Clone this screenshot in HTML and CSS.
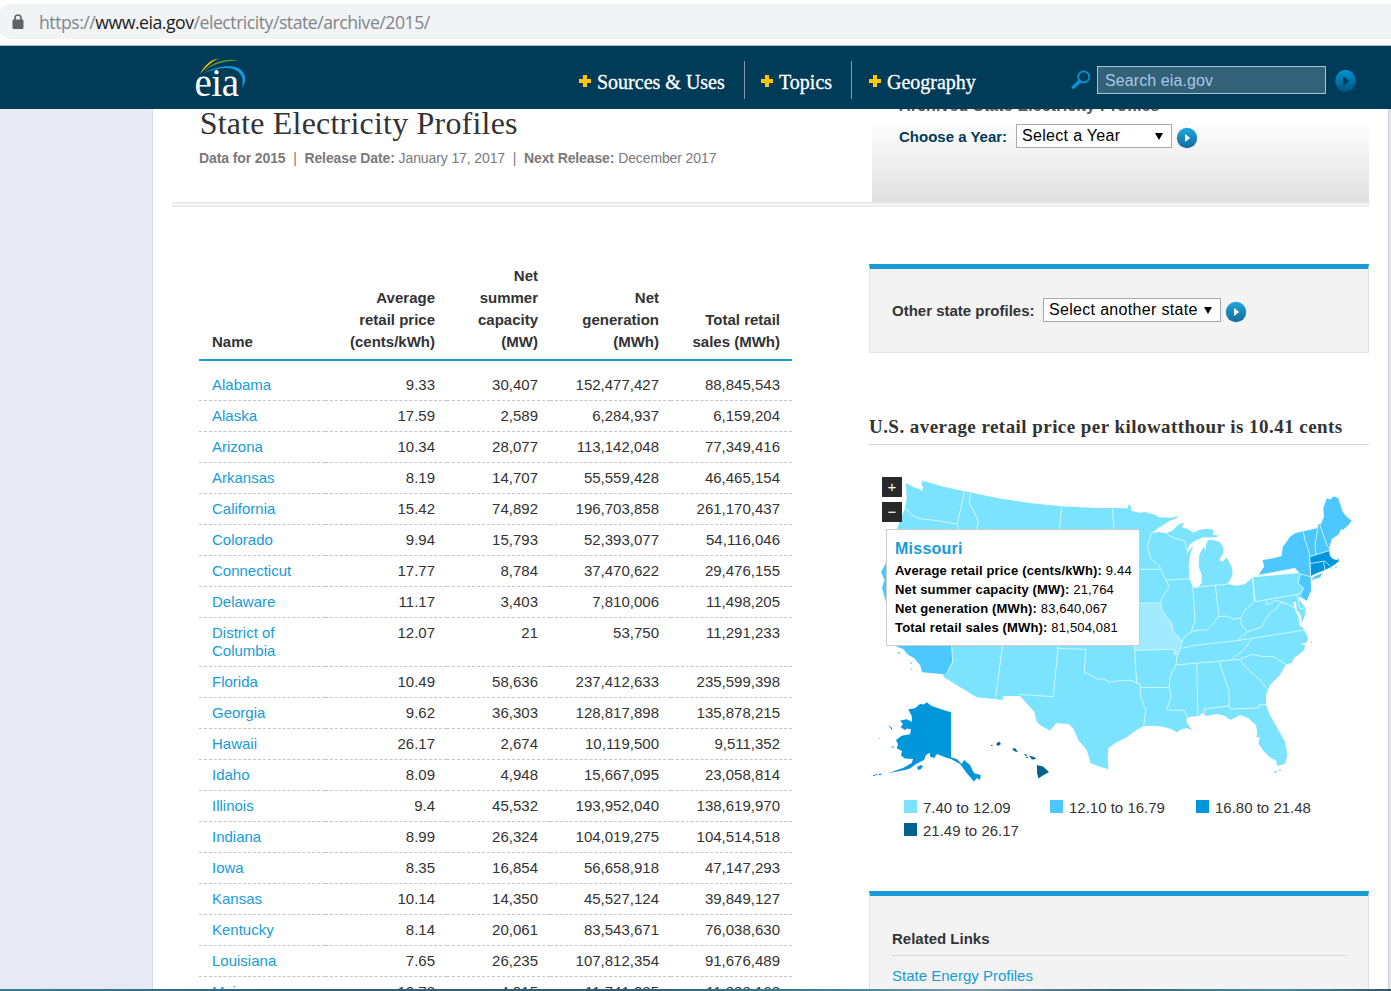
FILE: index.html
```html
<!DOCTYPE html>
<html lang="en">
<head>
<meta charset="utf-8">
<title>State Electricity Profiles</title>
<link rel="stylesheet" href="styles.css">
</head>
<body>
<div class="urlbar"><div class="address">
<svg class="lock" width="12" height="16" viewBox="0 0 12 16"><rect x="0.5" y="5.5" width="11" height="9.5" rx="1.3" fill="#5f6368"/><path d="M3 6V4a3 3 0 0 1 6 0v2" fill="none" stroke="#5f6368" stroke-width="1.6"/></svg>
<span class="url">https://<b>www.eia.gov</b>/electricity/state/archive/2015/</span></div></div>
<header class="top">
<svg class="logo" width="56" height="44" viewBox="192 55 56 44"><path d="M200 74C204 66 211 59 219 58.500C212 61 207 66 200 74Z" fill="#ffc708"/><path d="M203 72C211 63 226 57 239 61C226 60 213 64 203 72Z" fill="#5d9732"/><path d="M204 73C219 65 239 63 244 74C246.500 79 245 84 242 88C243.500 81 243 76 238 71.500C230 65.500 217 68 204 73Z" fill="#189bd7"/><text x="194.500" y="95.500" textLength="44.500" class="logo-text">eia</text></svg>
<nav class="nav">
<a class="n1"><i class="plus"></i><span>Sources &amp; Uses</span></a><a class="n2"><i class="plus"></i><span>Topics</span></a><a class="n3"><i class="plus"></i><span>Geography</span></a>
</nav>
<div class="search"><svg width="20" height="20" viewBox="0 0 20 20"><circle cx="12.700" cy="7" r="5.600" fill="none" stroke="#0096d7" stroke-width="1.800"/><path d="M8.500 11.500L2.500 17" stroke="#0096d7" stroke-width="3.600" stroke-linecap="round"/></svg><div class="field">Search eia.gov</div>
<svg class="go" width="22" height="24" viewBox="0 0 22 24"><defs><linearGradient id="g1" x2="0" y2="1"><stop offset="0" stop-color="#0096d7"/><stop offset="1" stop-color="#005079"/></linearGradient></defs><ellipse cx="10.500" cy="12" rx="10.300" ry="11" fill="url(#g1)"/><path d="M8 7v10l6-5z" fill="#003b57"/></svg></div>
</header>
<main class="viewport"><div class="sheet">
<section class="intro">
<div class="headline"><h1>State Electricity Profiles</h1>
<p><b>Data for 2015</b><i>|</i><b>Release Date:</b> January 17, 2017<i>|</i><b>Next Release:</b> December 2017</p></div>
<div class="archive"><h2>Archived State Electricity Profiles</h2>
<div class="pick"><label>Choose a Year:</label><span class="select year">Select a Year<em></em></span><svg class="arrow" width="22" height="22" viewBox="0 0 22 22"><defs><linearGradient id="g2" x2="0" y2="1"><stop offset="0" stop-color="#1ea9e1"/><stop offset="1" stop-color="#146a99"/></linearGradient></defs><circle cx="11" cy="11" r="10.200" fill="url(#g2)"/><path d="M9 7v8l5.200-4z" fill="#fff"/></svg></div></div>
</section>
<div class="columns">
<table>
<colgroup><col class="c1"><col class="c2"><col class="c3"><col class="c4"><col class="c5"></colgroup>
<thead><tr><th>Name</th><th>Average<br>retail price<br>(cents/kWh)</th><th>Net<br>summer<br>capacity<br>(MW)</th><th>Net<br>generation<br>(MWh)</th><th>Total retail<br>sales (MWh)</th></tr></thead>
<tbody>
<tr><td>Alabama</td><td>9.33</td><td>30,407</td><td>152,477,427</td><td>88,845,543</td></tr>
<tr><td>Alaska</td><td>17.59</td><td>2,589</td><td>6,284,937</td><td>6,159,204</td></tr>
<tr><td>Arizona</td><td>10.34</td><td>28,077</td><td>113,142,048</td><td>77,349,416</td></tr>
<tr><td>Arkansas</td><td>8.19</td><td>14,707</td><td>55,559,428</td><td>46,465,154</td></tr>
<tr><td>California</td><td>15.42</td><td>74,892</td><td>196,703,858</td><td>261,170,437</td></tr>
<tr><td>Colorado</td><td>9.94</td><td>15,793</td><td>52,393,077</td><td>54,116,046</td></tr>
<tr><td>Connecticut</td><td>17.77</td><td>8,784</td><td>37,470,622</td><td>29,476,155</td></tr>
<tr><td>Delaware</td><td>11.17</td><td>3,403</td><td>7,810,006</td><td>11,498,205</td></tr>
<tr><td>District of<br>Columbia</td><td>12.07</td><td>21</td><td>53,750</td><td>11,291,233</td></tr>
<tr><td>Florida</td><td>10.49</td><td>58,636</td><td>237,412,633</td><td>235,599,398</td></tr>
<tr><td>Georgia</td><td>9.62</td><td>36,303</td><td>128,817,898</td><td>135,878,215</td></tr>
<tr><td>Hawaii</td><td>26.17</td><td>2,674</td><td>10,119,500</td><td>9,511,352</td></tr>
<tr><td>Idaho</td><td>8.09</td><td>4,948</td><td>15,667,095</td><td>23,058,814</td></tr>
<tr><td>Illinois</td><td>9.4</td><td>45,532</td><td>193,952,040</td><td>138,619,970</td></tr>
<tr><td>Indiana</td><td>8.99</td><td>26,324</td><td>104,019,275</td><td>104,514,518</td></tr>
<tr><td>Iowa</td><td>8.35</td><td>16,854</td><td>56,658,918</td><td>47,147,293</td></tr>
<tr><td>Kansas</td><td>10.14</td><td>14,350</td><td>45,527,124</td><td>39,849,127</td></tr>
<tr><td>Kentucky</td><td>8.14</td><td>20,061</td><td>83,543,671</td><td>76,038,630</td></tr>
<tr><td>Louisiana</td><td>7.65</td><td>26,235</td><td>107,812,354</td><td>91,676,489</td></tr>
<tr><td>Maine</td><td>12.78</td><td>4,915</td><td>11,741,285</td><td>11,888,168</td></tr>
</tbody></table>
<aside>
<div class="panel other"><label>Other state profiles:</label><span class="select state">Select another state<em></em></span><svg class="arrow" width="22" height="22" viewBox="0 0 22 22"><circle cx="11" cy="11" r="10.200" fill="url(#g2)"/><path d="M9 7v8l5.200-4z" fill="#fff"/></svg></div>
<h3>U.S. average retail price per kilowatthour is 10.41 cents</h3>
<div class="map">
<svg width="500" height="325" viewBox="869 465 500 325">
<path class="light" d="M905.700 483.300L908.300 484.300 915 487.700 920 489 922 491.500 923.300 487 921.500 485 922.300 480.500 943.300 486.700 965 491.300 998.300 498.300 1031.700 503.300 1061.700 506.300 1091.700 507.700 1127.700 508.300 1128.500 504.300 1130.500 505.500 1131.700 511 1140 512.700 1145 512 1155 514.700 1159 517.500 1163.300 517.300 1170 518 1179 515.700 1176 518.500 1170 520.700 1160 526.700 1151.700 533.300 1158 532 1166 533.300 1173.300 530 1178 525 1184.300 522.300 1181.700 527.300 1188.300 529.300 1193.300 532.700 1199 530 1206.700 528.700 1214 530 1212.700 534.700 1219.300 535.700 1215 537.300 1203.300 537.300 1195 540.700 1189.300 545 1186 554 1193.300 546 1190 555 1188.700 566.700 1189.300 578.300 1192.700 586.700 1196.700 588 1201.700 583.300 1201.700 575 1198.700 566.700 1199.300 555 1203.300 546.700 1206 550.500 1205.500 545 1208 540.500 1211 539.500 1219.300 541.700 1223.300 547.300 1223.300 553.300 1219.300 560 1222.700 561.700 1226.700 557.300 1231.700 566.700 1232.700 574 1229.300 581.700 1226.700 584 1236.700 585.700 1245 584 1252.700 577.300 1310 572 1311 590.700 1306.700 600.700 1300.700 596.700 1298.300 598.300 1301.700 603.300 1306 608.300 1305 615 1302.300 622.700 1300.700 615 1296.700 610 1296 601.700 1293.300 602.700 1295 610 1298.300 616.700 1299.300 625 1303.300 628.300 1308.300 638.300 1306 642.700 1300 644.300 1305 645 1304.300 650 1298.300 655 1294 658 1291.700 663.300 1286 664.300 1280 675 1270 685 1266 695 1266 705 1270 715 1277.300 728.300 1285 741.700 1287.300 755 1285 764 1277.300 766 1276 760.700 1270 757.300 1263.300 750.700 1258.300 743.300 1260 736.700 1256.700 738 1257 732 1256 725 1248.300 718.300 1240 715 1230.700 720 1225 716 1216.700 714 1205.700 716 1202.300 712.700 1199.300 716 1190 716.700 1186 719 1187.500 724 1192.700 730.700 1187 728 1181.700 729.300 1176.700 732.300 1171.700 729.300 1163.300 726.700 1153.300 725.700 1144 726 1136.700 730 1126.700 737.300 1115 743.300 1108.300 748.300 1107.700 760 1108.700 769.300 1100 766.700 1090.700 763.300 1086.700 750 1078.300 740 1073.300 728.300 1068.300 724 1056 723.300 1050 730.700 1040 725 1036.700 721.700 1034.300 711.700 1020 696 1003.300 696 1002.700 700 976.700 697.300 944 677.300 896.700 529 905 508 906.700 498.300Z"/>
<path class="mid" d="M890 535L886 563 881 572 884.500 580 882 588 886 602 890 630 896.700 646.700 903 649 908.300 655 914 658 920 665 922.300 672.300 946 674.500 949 667 952.300 661.700 951.500 646 940 610Z"/>
<path class="hover" d="M1135 604L1160.700 602.700 1162.700 611.700 1171.700 623.300 1173.300 631.700 1180 638.300 1181.700 643.300 1178.300 654.300 1174 654.300 1175 649.300 1135 650.300Z"/>
<path class="mid" d="M1258.300 575.300L1264 566.700 1262.700 560 1273.300 558.300 1281.700 556 1282.700 547.300 1290 536.700 1295 533.300 1316.700 528.300 1318.300 524.300 1321 524 1324 516.700 1323.300 508.300 1326.700 498.300 1330 499.500 1334 496.300 1338.300 498.300 1342.700 511.700 1346.700 516.700 1351.700 520.700 1348.300 525 1343 530 1341 529 1339 534 1331.700 539.300 1329.300 548 1329 552 1310 557 1310.500 575 1311 590.700 1306.700 600.700 1300.700 596.700 1304 588.300 1298.300 583.300 1300 574 1295 568.300Z"/>
<path class="mid" d="M1311 580L1315 576 1323 573 1320 577.500Z"/>
<path class="dark" d="M1310 556.700L1329 550.700 1330 556 1333 559 1338.700 560.500 1336 557.500 1339.500 560 1338 562 1334 565 1329 568 1323.300 570.700 1317 573 1311 576Z"/>
<path class="speck" d="M1330 568h2M1335 567h2M1311 642.500h1M1274 772h3M1279 770h2M897 653h4M910 663h2M911 669h1"/>
<path class="lines" d="M905.700 508L911.700 515 919 518.500 931.700 520 943 521.500 957.300 524M964.300 491.700L957.300 524 959 530M970.300 493L969.300 503 974 512 978.300 521.700 976.700 530M1061.700 506.300L1059.300 530M1112.300 509L1114.300 530M1002.700 645L995.300 699.300M951.700 646L952.700 661.700 946.700 674M1058.300 645L1053.300 696.700 1019 694.300M1057.300 648.300L1085.700 649.300 1084.300 672.700 1091 675 1097 679 1103.300 679 1110 682 1116.700 681 1130 680.300 1140 684.300 1140.700 696.700 1145.700 710 1143.700 726M1134.300 645.700L1136.700 683M1140.700 687.300L1169.300 687.700 1171 696.700 1166.700 710 1184.300 710.300 1187.300 717.300M1169.300 687.700L1170 676.700 1176 665 1240 659.300 1251.700 654.300 1262 656.500 1273.300 656.700 1286 664.300M1177.300 655L1176 665M1135 650.300L1175 649.300 1174 654.300 1178.300 654.300 1181.700 643.300 1180 638.300 1173.300 631.700 1171.700 623.300 1162.700 611.700 1160.700 602.700 1139 603.300M1196.700 663.300L1198 716M1219.300 662L1229 691.700 1229 706 1231 709 1258.300 708 1259 705 1266 704.300M1204.300 716L1204.300 708.700 1229 706M1240 660L1246.700 668.300 1260 680 1267.300 689.300M1230.700 660L1243.300 650 1251.700 639.300M1181.700 648.300L1192.300 645.700 1236.700 640.700 1305 630M1236.700 640.700L1247.300 631.700M1181.700 642.700L1185 636 1192.300 631.700 1199 630 1206.700 630 1212 625 1218.300 616.700 1227 616 1233 619 1240.700 618.300 1241.700 625 1247.300 631.700 1261.700 627 1265 620 1270 613 1276.700 608 1281 602 1287 604 1295 608M1192.700 587.300L1195 620 1191 633M1215.300 585.700L1219 616.700M1193.300 587.300L1226.700 584.300M1240.700 618.300L1245 610 1254 601.700 1252.700 577.300 1255.300 601.700 1299.300 594 1304 588.300 1298.300 583.300 1300 574 1295 568.300 1258.300 575.300M1266 600L1267 605 1276 600 1287 604M1297 595L1300 609 1305 608M1151.700 533.300L1147.300 546.700 1150.700 558.300 1160 566.700 1161.700 571.700 1165.700 580 1189 578.700M1139 569.300L1160 569.300M1165.700 580L1169.300 586.700 1162.700 596.700 1160.700 602.700M1166 533.300L1173.300 537.700 1185 541 1186.700 550M1303.300 532L1305 540 1309.300 553.300 1310.700 576.700 1300 574M1318.300 525L1315 545 1316 555M1320 525L1326.700 545 1329.300 548.300M1310 556.700L1329 550.700M1310 563.500L1325 561 1330 566M1323.500 562L1325 570"/>
<path class="dark" d="M908.300 709.300L915 708.300 920 704 924 704.500 926.700 702.300 931.700 706 943.300 710 951 712.300 951 757.300 956.700 759 961.700 764 964 760 970 765 974 773.300 980.700 775 980 780 977 778 974 781.500 966.700 773 960 764 951 759 945 757.300 937 754 934.300 758 930 756.500 930 752.700 926 755 924 760 916 764 910 768.500 905 770 887.700 773.300 903 768 911.700 763 913 759 905 758.500 901 755.500 902 751 896.700 748.300 898 744 896 740 901.700 735.700 910 734.300 911 729.300 907 728.500 905 730 900.700 727.300 903 724 900 720.700 906.700 719.300 912 721.700 911.700 716ZM917 767l4-2 2 1-2 3-3 1zM888 725l4 3v2zM891 746l3 1-1 1zM873 775l4-1v1l-4 1zM878 774l4-.5-2 2zM879 738h1v1z"/>
<path class="darkest" d="M996 744L999 741.500 1001 744 998 746ZM991 745h1.500v1h-1.500zM1012 749L1015 748 1018 752 1015 751.500ZM1023 754L1028 755 1026 756ZM1026 757h2v1h-2zM1029 755.500L1034 757 1036.500 759 1032 759.500ZM1037 765L1043 766.500 1049 772 1042 776 1038.500 778.500 1037 773Z"/>
</svg>
<button class="zoom in">+</button><button class="zoom out">−</button>
<div class="tip"><strong>Missouri</strong><p><b>Average retail price (cents/kWh):</b> 9.44</p><p><b>Net summer capacity (MW):</b> 21,764</p><p><b>Net generation (MWh):</b> 83,640,067</p><p><b>Total retail sales (MWh):</b> 81,504,081</p></div>
</div>
<ul class="legend"><li><i class="k1"></i>7.40 to 12.09</li><li><i class="k2"></i>12.10 to 16.79</li><li><i class="k3"></i>16.80 to 21.48</li><li><i class="k4"></i>21.49 to 26.17</li></ul>
<div class="panel related"><h4>Related Links</h4><a>State Energy Profiles</a></div>
</aside>
</div></div></main>
<div class="taskbar"></div>
</body>
</html>
```
FILE: styles.css
```css
*{box-sizing:border-box}
body{margin:0;height:991px;display:flex;flex-direction:column;overflow:hidden;background:#fff;font:15px/18px "Liberation Sans",Arial,sans-serif;color:#333}
h1,h2,h3,h4,p,ul{margin:0;padding:0}
.urlbar{height:46px;flex:none;padding-top:4px;border-bottom:1px solid #b5b8ba}
.address{height:35px;background:#f1f3f4;border-radius:18px 0 0 18px;margin-left:-5px;display:flex;align-items:center;padding-left:17px}
.lock{margin-right:15px}
.url{font:17.7px/34px "Open Sans","Noto Sans",sans-serif;color:#80868b;letter-spacing:-.5px;white-space:nowrap}
.url b{font-weight:400;color:#202124}
.top{height:63px;flex:none;background:#003b57;display:flex;position:relative;z-index:1}
.logo{margin:9px 0 0 192px}
.logo-text{font:39px "Liberation Serif",serif;fill:#fff}
.nav{display:flex;margin-left:331px;height:38px;margin-top:15px}
.nav a{display:flex;align-items:center;font:20px/38px "Liberation Serif",serif;color:#fff;border-right:1px solid #7d9bab;-webkit-text-stroke:.3px #fff;padding-top:4px;white-space:nowrap}
.n1{width:166px}.n2{width:107px;padding-left:16px}.n3{width:130px;padding-left:17px}
.nav .n3{border:0}
.n1 span,.n2 span,.n3 span{letter-spacing:0}
.plus{width:12px;height:12px;margin:-3px 6px 0 0;flex:none;background:linear-gradient(#ffc708,#ffc708) 50% 50%/4px 12px no-repeat,linear-gradient(#ffc708,#ffc708) 50% 50%/12px 4px no-repeat}
.search{display:flex;margin:20px 0 0 89px}
.search svg{margin:4px 6px 0 0}
.field{width:229px;height:28px;border:1px solid #a4c0dc;background:#336178;color:#a9c7e4;font-size:16px;line-height:27px;padding-left:7px;margin-right:9px;letter-spacing:.1px}
.search .go{margin:3px 0 0}
.viewport{height:880px;flex:none;overflow:hidden;background:#e7eaf4;padding-left:152px}
.sheet{width:1237px;height:100%;background:#fff;border-left:1px solid #d8dbe3;border-right:1px solid #ccd3d8;box-shadow:3px 0 #dfe4e8;padding-left:19px}
.intro{width:1197px;height:98px;display:flex;border-bottom:5px double #ebebeb;padding-left:27px}
.headline{width:673px}
h1{font:32px/36px "Liberation Serif",serif;margin:-4px 0 0 .7px;letter-spacing:.2px}
.headline p{font-size:14px;line-height:18px;margin-top:8px;color:#7a7a7a;white-space:nowrap;letter-spacing:-.11px}
.headline i{font-style:normal;padding:0 7.7px}
.archive{width:497px;height:93px;background:linear-gradient(#fff 10%,#e0e0e0);padding-left:27px}
.archive h2{font-size:16px;line-height:20px;margin-top:-13px;color:#555;letter-spacing:.13px}
.pick{display:flex;align-items:center;height:24px;margin-top:8px}
.pick label{font-size:15px;font-weight:bold;color:#003b57;width:117px;padding-top:2px}
.select{height:24px;background:#fff;border:1px solid #a9a9a9;color:#000;font-size:16px;line-height:22px;padding:0 8px 0 5px;display:flex;justify-content:space-between;align-items:center;white-space:nowrap;letter-spacing:.32px}
.select em{border:4px solid transparent;border-top:7px solid #000;border-bottom:0}
.year{width:156px}.state{width:178px}
.arrow{margin:4px 0 0 4px}
.columns{display:flex;padding-left:27px}
table{width:593px;border-collapse:separate;border-spacing:0;table-layout:fixed;margin-top:58px;align-self:flex-start}
.c1{width:126px}.c2{width:122px}.c3{width:103px}.c4{width:121px}.c5{width:121px}
th{line-height:22px;vertical-align:bottom;text-align:right;padding:0 12px 6px 0;border-bottom:2px solid #189bd7;white-space:nowrap}
td{padding:6px 12px 6px 0;text-align:right;vertical-align:top;border-bottom:1px dashed #c6c6c6}
th:first-child,td:first-child{text-align:left;padding-left:13px}
td:first-child,.related a{color:#189bd7}
tbody tr:first-child td{padding-top:15px}
aside{width:500px;margin:57px 0 0 77px}
.panel{background:#f3f3f3;border:1px solid #e2e2e2;border-top:5px solid #189bd7;padding-left:22px}
.other{height:89px;display:flex;padding-top:29px;align-items:flex-start}
.other label{font-weight:bold;width:151px;line-height:26px}
.other .arrow{margin-top:3px}
h3{font:bold 19px/24px "Liberation Serif",serif;margin-top:62px;height:30px;border-bottom:1px solid #d5d5d5;letter-spacing:.45px;white-space:nowrap}
.map{position:relative;height:345px;padding-top:20px}
.map svg{display:block;overflow:visible}
.light{fill:#7ce3ff}.mid{fill:#4dc8ff}.dark{fill:#0096db}.darkest{fill:#00628d}.hover{fill:#a1eaff}
.lines{fill:none;stroke:#e3faff;stroke-width:.8;stroke-linejoin:round}
.speck{stroke:#4dc8ff;stroke-width:1}
.zoom{position:absolute;left:13px;width:20px;height:20px;border:0;padding:0;background:#292929;color:#fff;font:15px/20px "Liberation Sans",sans-serif}
.in{top:32px}.out{top:57px}
.tip{position:absolute;left:17px;top:84px;width:254px;height:117px;background:#fff;border:1px solid #ccc;padding:8px;color:#000;font-size:13px;line-height:19px;white-space:nowrap;z-index:2}
.tip strong{display:block;color:#189bd7;font-size:16px;line-height:21px;margin-bottom:2px;letter-spacing:.25px}
.tip p{letter-spacing:.16px}
.legend{list-style:none;display:flex;flex-wrap:wrap;margin:6px 0 0 35px}
.legend li{width:146px;height:23px;display:flex;line-height:23px;white-space:nowrap}
.legend i{width:13px;height:13px;margin:4px 6px 0 0}
.k1{background:#7ce3ff}.k2{background:#4dc8ff}.k3{background:#0096db}.k4{background:#00628d}
.related{margin-top:49px;height:120px;padding:32px 21px 0 22px}
.related h4{font-size:15px;line-height:22px;height:28px;border-bottom:1px solid #d8d8d8;margin-bottom:11px}
.taskbar{height:2px;flex:none;background:linear-gradient(90deg,#397d9b,#326078 20%,#315b73 45%,#3f8298 60%,#7f9baf 70%,#376375 80%,#4c8ca1 92%,#34546d)}
```
